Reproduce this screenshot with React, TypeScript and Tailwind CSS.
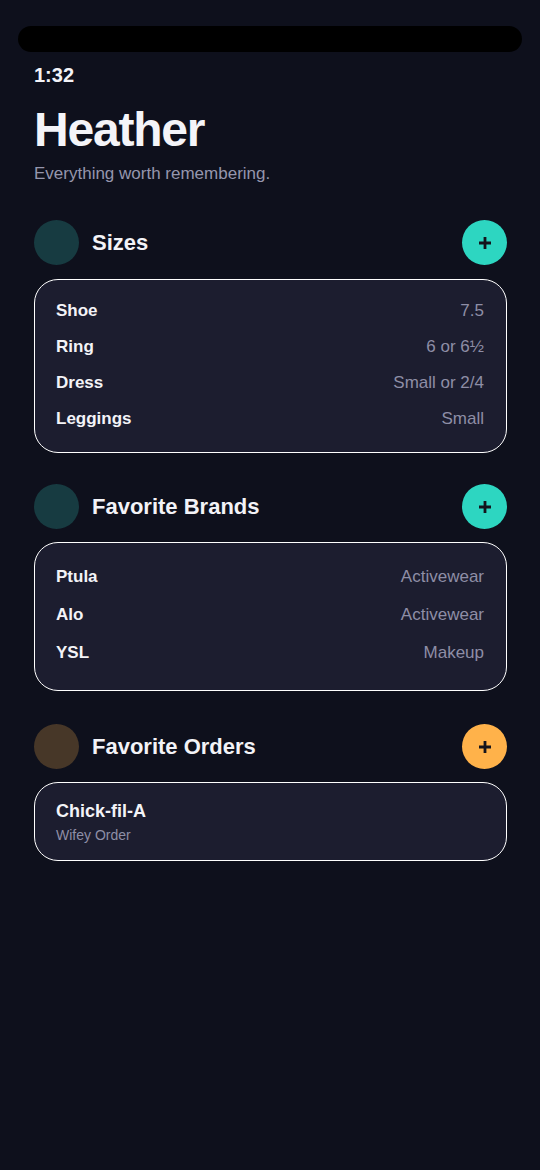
import React from "react";

const font = { fontFamily: '"Liberation Sans", Arial, sans-serif' };

function Plus() {
  return (
    <svg width="14" height="14" viewBox="0 0 14 14">
      <path d="M7 1v12M1 7h12" stroke="#14141c" strokeWidth="2.8" strokeLinecap="butt" />
    </svg>
  );
}

function Header({ title, dot, btn }: { title: string; dot: string; btn: string }) {
  return (
    <div className="flex h-[45px] items-center justify-between">
      <div className="flex items-center gap-[13px]">
        <div className={`h-[45px] w-[45px] rounded-full ${dot}`} />
        <div className="text-[22px] font-bold leading-none text-[#f3f3f7]">{title}</div>
      </div>
      <div className={`flex h-[45px] w-[45px] items-center justify-center rounded-full ${btn}`}>
        <Plus />
      </div>
    </div>
  );
}

function Row({ k, v }: { k: string; v: string }) {
  return (
    <div className="flex h-6 items-center justify-between text-[17px] leading-6">
      <span className="font-bold text-[#f3f3f7]">{k}</span>
      <span className="text-[#8e8ea6]">{v}</span>
    </div>
  );
}

export default function App() {
  return (
    <div className="min-h-[1170px] w-full bg-[#0e101c]" style={font}>
      <div className="pt-[26px]">
        <div className="mx-[18px] h-[26px] rounded-full bg-black" />
      </div>
      <div className="pl-[34px] pr-[33px]">
        <div className="mt-[12px] text-[20px] font-bold leading-[23px] text-[#f3f3f7]">1:32</div>
        <h1 className="mt-[19px] text-[48px] font-bold leading-[48px] tracking-tight text-[#f4f4f8]">Heather</h1>
        <p className="mt-[8px] text-[17px] leading-6 text-[#9596ad]">Everything worth remembering.</p>

        <div className="mt-[34px]">
          <Header title="Sizes" dot="bg-[#173b41]" btn="bg-[#2dd6c1]" />
          <div className="mt-[14px] flex flex-col gap-[12px] rounded-3xl border border-white bg-[#1c1d2f] pl-[21px] pr-[22px] pt-[19px] pb-[21px]">
            <Row k="Shoe" v="7.5" />
            <Row k="Ring" v="6 or 6½" />
            <Row k="Dress" v="Small or 2/4" />
            <Row k="Leggings" v="Small" />
          </div>
        </div>

        <div className="mt-[31px]">
          <Header title="Favorite Brands" dot="bg-[#173b41]" btn="bg-[#2dd6c1]" />
          <div className="mt-[13px] flex flex-col gap-[14px] rounded-3xl border border-white bg-[#1c1d2f] pl-[21px] pr-[22px] pt-[22px] pb-[25px]">
            <Row k="Ptula" v="Activewear" />
            <Row k="Alo" v="Activewear" />
            <Row k="YSL" v="Makeup" />
          </div>
        </div>

        <div className="mt-[33px]">
          <Header title="Favorite Orders" dot="bg-[#473728]" btn="bg-[#ffb24a]" />
          <div className="mt-[13px] flex flex-col rounded-3xl border border-white bg-[#1c1d2f] pl-[21px] pr-[22px] pt-[17px] pb-[16px]">
            <div className="text-[18px] font-bold leading-[22px] text-[#f3f3f7]">Chick-fil-A</div>
            <div className="mt-[4px] text-[14px] leading-[18px] text-[#8e8ea6]">Wifey Order</div>
          </div>
        </div>
      </div>
    </div>
  );
}
